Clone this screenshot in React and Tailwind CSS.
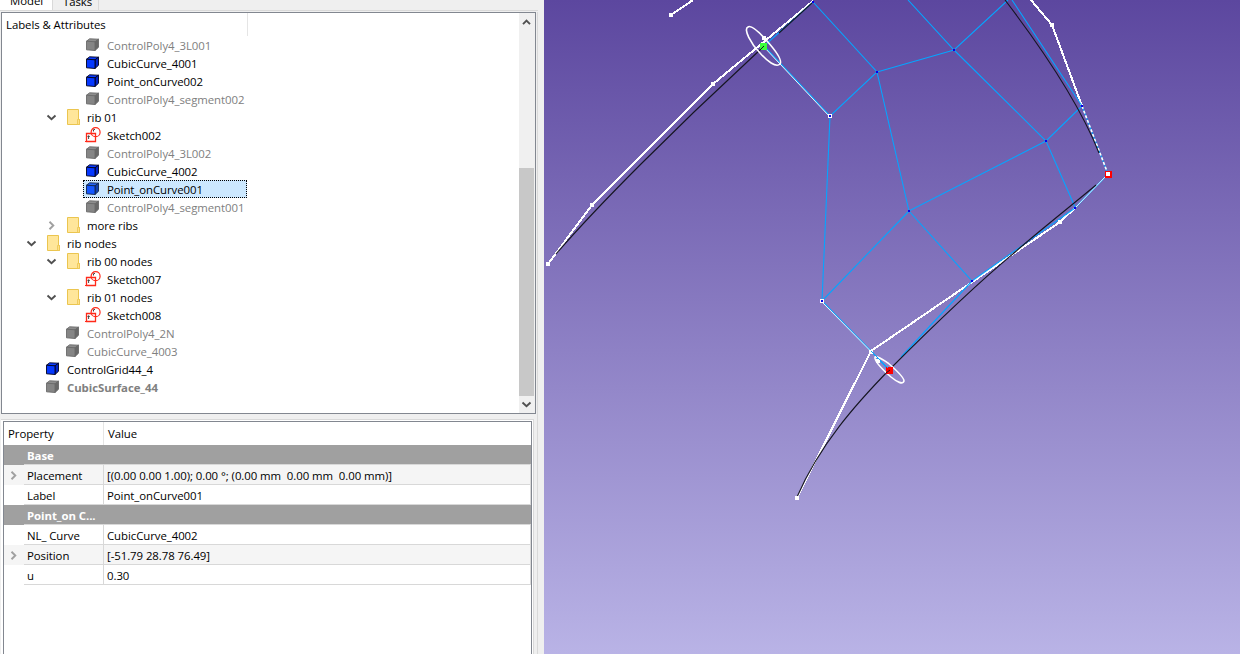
const TREE = [
  [107, "cube-off", "ControlPoly4_3L001", ""],
  [107, "cube", "CubicCurve_4001", ""],
  [107, "cube", "Point_onCurve002", ""],
  [107, "cube-off", "ControlPoly4_segment002", ""],
  [87, "folder", "rib 01", "", "open"],
  [107, "sketch", "Sketch002", ""],
  [107, "cube-off", "ControlPoly4_3L002", ""],
  [107, "cube", "CubicCurve_4002", ""],
  [107, "cube", "Point_onCurve001", "", "selected"],
  [107, "cube-off", "ControlPoly4_segment001", ""],
  [87, "folder", "more ribs", "", "closed"],
  [67, "folder", "rib nodes", "", "open"],
  [87, "folder", "rib 00 nodes", "", "open"],
  [107, "sketch", "Sketch007", ""],
  [87, "folder", "rib 01 nodes", "", "open"],
  [107, "sketch", "Sketch008", ""],
  [87, "cube-off", "ControlPoly4_2N", ""],
  [87, "cube-off", "CubicCurve_4003", ""],
  [67, "cube", "ControlGrid44_4", ""],
  [67, "cube-off", "CubicSurface_44", "font-bold"],
];

const INDENT = { 67: "w-[20px]", 87: "w-[40px]", 107: "w-[60px]" };

function Chevron({ dir, color = "#505050" }) {
  const d = { down: "M1.5 3.5 5.5 7.2 9.5 3.5", up: "M2 7.2 5.5 3.7 9 7.2", right: "M3.5 1.8 7.3 5.5 3.5 9.2" }[dir];
  return (
    <svg width="11" height="11" viewBox="0 0 11 11" className="block shrink-0">
      <path d={d} fill="none" stroke={color} strokeWidth="1.9" />
    </svg>
  );
}

function Icon({ kind, selected }) {
  if (kind === "folder")
    return (
      <svg width="16" height="16" viewBox="0 0 16 16" className="block shrink-0">
        <path d="M1.5.5h11v9.5l1 .5v5h-12z" fill="#ffe69a" stroke="#ebc54f" />
        <path d="M11.5 15v-4.5h2v5h-2z" fill="#ffe08a" stroke="#ebc54f" strokeWidth=".8" />
      </svg>
    );
  if (kind === "sketch")
    return (
      <svg width="16" height="16" viewBox="0 0 16 16" className="block shrink-0" fill="none">
        <path d="M1.5 6.5h9v8h-9z" stroke="#ff2a1a" strokeWidth="1.3" />
        <circle cx="10.6" cy="5.2" r="4.5" stroke="#ff2a1a" strokeWidth="1.2" />
        <path d="M0 14.5h3M5.5 6.5h5" stroke="#ff2a1a" strokeWidth="1.2" />
        <path d="M3.6 12V8.8M2.6 10l1-1.3 1.1 1.3M8.5 4.5V3M10 2.3l-2 .8" stroke="#333" strokeWidth=".9" />
      </svg>
    );
  const off = kind === "cube-off";
  const [front, top, side, line] = off
    ? ["#858585", "#8d8d8d", "#686868", "#6a6a6a"]
    : selected
      ? ["#1457ff", "#2364f5", "#103fae", "#10254a"]
      : ["#0538ff", "#0b3cff", "#0022c8", "#00001c"];
  return (
    <svg width="16" height="16" viewBox="0 0 16 16" className="block shrink-0" stroke={line} strokeWidth=".9" strokeLinejoin="round">
      <path d="M1.5 4.2 4.6 1.8 13.5 2.2 10 4.8z" fill={top} />
      <path d="M10 4.8 13.5 2.2V10.3L10 13.5z" fill={side} />
      <path d="M1.5 4.2 10 4.8v8.7L1.5 12.8z" fill={front} />
    </svg>
  );
}

function TreeRow({ row: [x, kind, label, cls, state] }) {
  const selected = state === "selected";
  return (
    <div className="flex h-[18px] items-center">
      <div className={`${INDENT[x]} shrink-0`} />
      <div className="flex w-[21px] shrink-0 justify-end pr-[6px]">
        {state === "open" && <Chevron dir="down" />}
        {state === "closed" && <Chevron dir="right" color="#a0a0a0" />}
      </div>
      <div
        className={`flex h-[18px] items-center pl-[2px] ${kind === "folder" ? "gap-[5px] pl-[3px]" : "gap-[6px]"} ${selected ? "w-[164px] bg-[#cce8ff] outline-1 outline-dotted -outline-offset-1 outline-black" : ""}`}
      >
        <Icon kind={kind} selected={selected} />
        <span className={`${cls} pt-px ${kind === "cube-off" ? "text-[#808080]" : "text-black"}`}>{label}</span>
      </div>
    </div>
  );
}

const PROPS = [
  ["Base"],
  ["Placement", "[(0.00 0.00 1.00); 0.00 °; (0.00 mm  0.00 mm  0.00 mm)]", true],
  ["Label", "Point_onCurve001"],
  ["Point_on C..."],
  ["NL_ Curve", "CubicCurve_4002"],
  ["Position", "[-51.79 28.78 76.49]", true],
  ["u", "0.30"],
];

function PropRow({ row: [name, value, expandable] }) {
  if (value === undefined)
    return (
      <div className="flex h-5 bg-[#a0a0a0] font-bold text-white">
        <div className="w-5 shrink-0" />
        <div className="flex flex-1 items-center border-b border-[#d8d8d8] pt-[2px] pl-[3px]">{name}</div>
      </div>
    );
  return (
    <div className={`flex h-5 ${expandable ? "bg-[#f5f5f5]" : "bg-white"}`}>
      <div className="flex w-5 shrink-0 items-center pl-1">{expandable && <Chevron dir="right" color="#a0a0a0" />}</div>
      <div className="flex w-20 shrink-0 items-center border-r border-b border-[#d8d8d8] pt-[2px] pl-[3px]">{name}</div>
      <div className="flex flex-1 items-center border-r border-b border-[#d8d8d8] pt-[2px] pl-[3px] whitespace-pre">{value}</div>
    </div>
  );
}

const BLUE_LINES = [
  "764,46 813,2 877,72 830,116 822,301",
  "764,46 830,116",
  "908,0 954,50 1046,141 1075,207",
  "877,72 954,50 1008,0",
  "877,72 909,211 1046,141 1082,106",
  "1012,0 1082,106 1108,174 1075,208 972,281 909,211",
  "909,211 822,301",
  "972,281 901,357",
  "822,301 871,351 889,370",
];

function Dot({ x, y, size = 4, color = "#fff" }) {
  return <rect x={x - size / 2} y={y - size / 2} width={size} height={size} fill={color} />;
}

function Viewport() {
  return (
    <svg viewBox="544 0 696 654" className="block h-[654px] w-[696px]" fill="none">
      <defs>
        <linearGradient id="sky" x1="0" y1="0" x2="0" y2="1">
          <stop offset="0" stopColor="#5c479f" />
          <stop offset="1" stopColor="#b9b3e6" />
        </linearGradient>
      </defs>
      <rect x="544" width="696" height="654" fill="url(#sky)" />
      <g stroke="#fff" strokeWidth="2" shapeRendering="crispEdges">
        <path d="M671 15 693 0M548 264 592 205 713 84 813 1M1031 0 1052 25 1082 106M1075 208 1060 222 871 351 797 498" />
      </g>
      <g stroke="#05a5ff" strokeWidth="1.1">
        {BLUE_LINES.map((points) => (
          <polyline key={points} points={points} />
        ))}
      </g>
      <g stroke="#fff">
        <path d="M763.5 46.5 829.5 116.5M821.5 301.5 871 351.5M1108 174 1075 208" strokeWidth=".9" />
        <path d="M1082 106 1108 174" strokeWidth="1.6" strokeDasharray="3 2" />
      </g>
      <g stroke="#151520" strokeWidth="1.1">
        <path d="M556 254C582 224 614 191 641 164L694 112 762 48M779 33 812 3" />
        <path d="M1005 0C1044 51 1080 105 1099 153" />
        <path d="M1096 185C1066 210 1039 231 1014 253 973 287 928 331 889 370 856 404 820 444 797 497" />
      </g>
      <g stroke="#fff" strokeWidth="1.6">
        <path d="M748 27C743 29 751 44 760 53 767 61 776 68 780 64 783 60 775 50 767 41 759 32 751 25 748 27Z" />
        <path d="M875 357C874 361 883 370 891 377 897 382 903 385 904 381 904 377 895 369 888 363 882 359 878 356 875 357Z" />
      </g>
      <g shapeRendering="crispEdges">
        <Dot x={671} y={15} />
        <Dot x={548} y={264} />
        <Dot x={592} y={205} />
        <Dot x={713} y={84} />
        <Dot x={764} y={38} />
        <Dot x={1052} y={25} />
        <Dot x={1060} y={222} />
        <Dot x={797} y={498} />
        <Dot x={871} y={352} />
        <Dot x={878} y={361} />
        <Dot x={763.5} y={46.5} size={7} color="#3cff3c" />
        <Dot x={1108.5} y={174.5} size={7} color="#ff0000" />
        <Dot x={1108} y={174} />
        <Dot x={889.5} y={370.5} size={7} color="#ff0000" />
        <Dot x={830} y={116} />
        <Dot x={822} y={301} />
      </g>
      <path stroke="#151520" d="M760 50 764 46M886 373 890 370" />
      <path stroke="#05a5ff" d="M871 351 888 368" />
      {[[830, 116], [822, 301], [813, 2], [877, 72], [954, 50], [1046, 141], [909, 211], [1075, 208], [972, 281], [1082, 106]].map(([x, y]) => (
        <Dot key={`${x}-${y}`} x={x} y={y} size={2} color="#0000ee" />
      ))}
    </svg>
  );
}

export default function App() {
  return (
    <div className="flex h-[654px] w-[1240px] overflow-hidden bg-[#efefef] font-['Open_Sans','Noto_Sans',sans-serif] text-[11.4px] leading-4 tracking-[-0.06px] text-black">
      <div className="flex w-[544px] shrink-0 flex-col">
        <div className="flex h-[10px] shrink-0 items-end overflow-hidden">
          <div className="flex h-[10px] w-[53px] items-end border-r border-[#d9d9d9] bg-white pl-[10px]">
            <span className="mb-px h-4">Model</span>
          </div>
          <div className="flex h-[10px] w-[46px] items-end border-r border-[#d9d9d9] pl-[10px]">
            <span className="h-4">Tasks</span>
          </div>
        </div>
        <div className="mb-px h-px w-[538px] shrink-0 bg-[#d9d9d9]" />
        <div className="flex h-[644px] w-[538px] shrink-0 flex-col border-r border-[#d9d9d9] pl-px">
          <div className="flex h-[402px] w-[535px] shrink-0 border border-[#828790] bg-white">
            <div className="flex-1 overflow-hidden">
              <div className="flex h-[23px] w-[246px] items-center border-r border-[#e5e5e5] pl-1">Labels &amp; Attributes</div>
              {TREE.map((row) => (
                <TreeRow key={row[2]} row={row} />
              ))}
            </div>
            <div className="flex w-[16px] flex-col bg-[#f0f0f0]">
              <div className="flex h-[18px] items-center pl-[2px]"><Chevron dir="up" /></div>
              <div className="h-[137px]" />
              <div className="h-[228px] w-[15px] bg-[#c8c8c8]" />
              <div className="flex h-[17px] items-center pl-[2px]"><Chevron dir="down" /></div>
            </div>
          </div>
          <div className="mt-[5px] flex w-[533px] flex-1 border-t border-r border-[#d9d9d9] bg-white pt-px pl-[2px]">
            <div className="flex w-[529px] flex-col border-t border-r border-l border-[#828790] bg-white">
              <div className="flex h-[23px] shrink-0">
                <div className="flex w-[100px] items-center border-r border-[#e5e5e5] pl-1">Property</div>
                <div className="flex items-center pl-1">Value</div>
              </div>
              {PROPS.map((row) => (
                <PropRow key={row[0]} row={row} />
              ))}
            </div>
          </div>
        </div>
      </div>
      <Viewport />
    </div>
  );
}
